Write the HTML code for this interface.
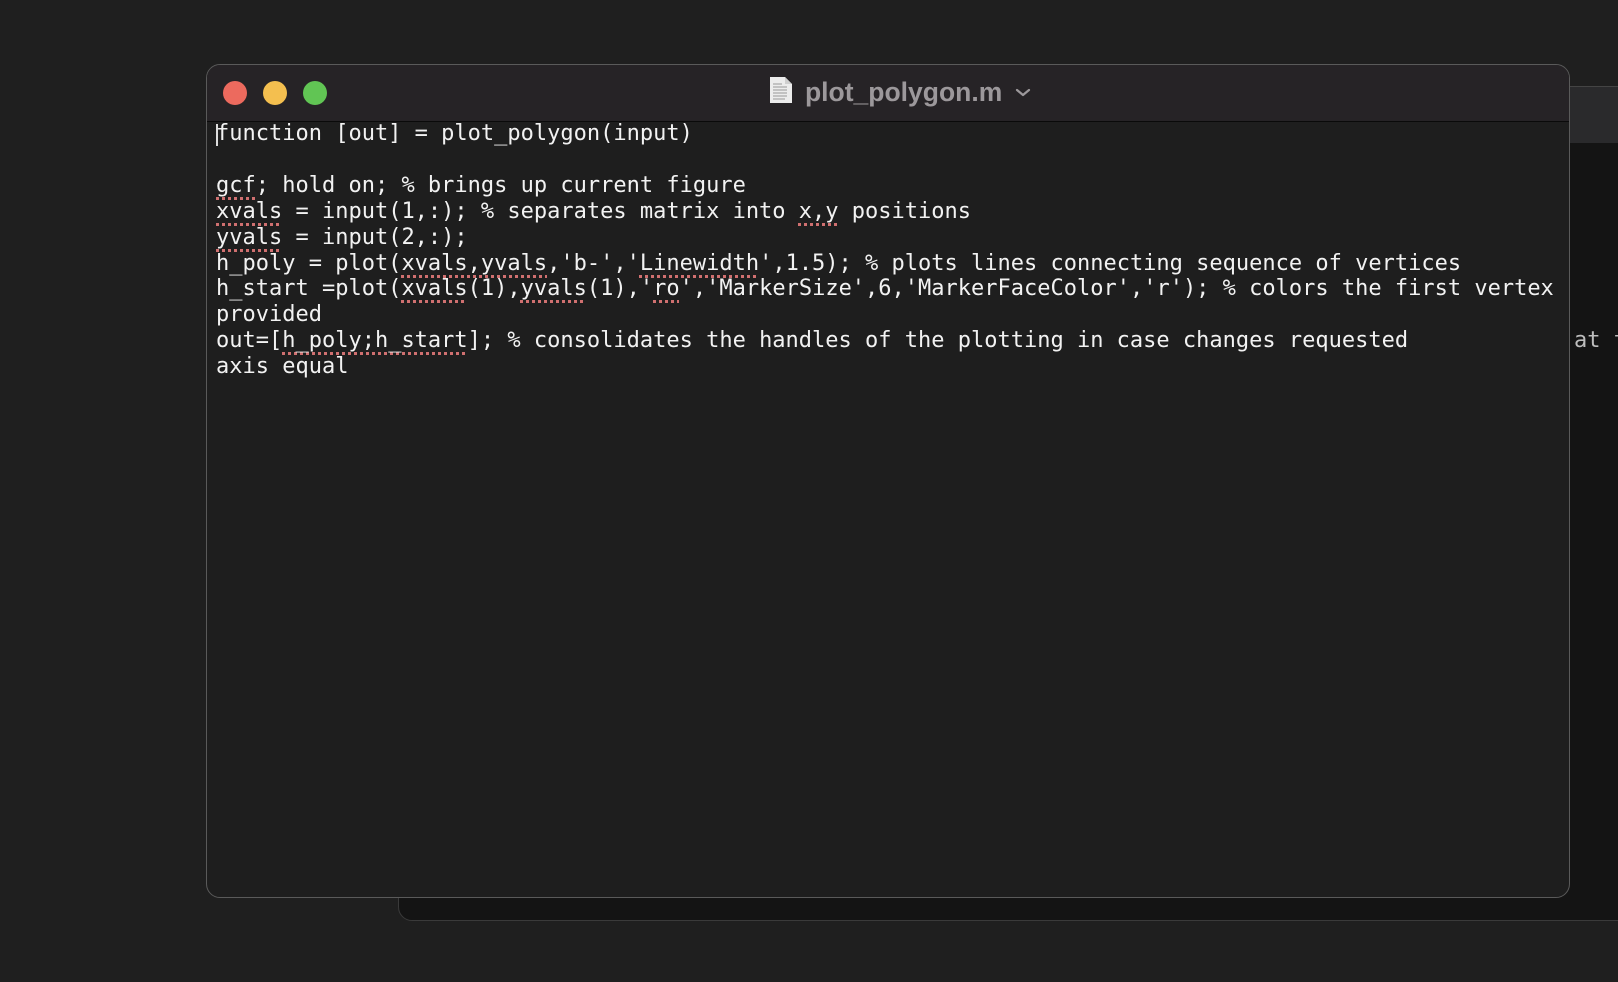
<!DOCTYPE html>
<html><head><style>
html,body{margin:0;padding:0;width:1618px;height:982px;background:#1f1f1f;overflow:hidden;position:relative;font-family:"Liberation Sans",sans-serif}
.back{position:absolute;left:398px;top:86px;width:1300px;height:835px;background:#141414;border:1px solid #3a3a3a;border-radius:14px;box-sizing:border-box}
.backbar{position:absolute;left:1570px;top:86px;width:60px;height:56px;background:#2a2a2c;border-top:1px solid #444}
.backtxt{position:absolute;left:1574px;top:328px;font:22px/26px "DejaVu Sans Mono",monospace;color:#bdbdbd;white-space:nowrap}
.win{position:absolute;left:206px;top:64px;width:1364px;height:834px;background:#1e1e1e;border:1px solid #5a5a5a;border-radius:14px;box-sizing:border-box;overflow:hidden}
.bar{position:absolute;left:0;top:0;right:0;height:56px;background:#262326;border-bottom:1px solid #0a0a0a}
.dot{position:absolute;top:16px;width:24px;height:24px;border-radius:50%}
.title{position:absolute;left:598px;top:7px;font:bold 26.5px/40px "Liberation Sans",sans-serif;color:#9c989b}
.code{position:absolute;left:9px;top:56px;margin:0;font:22px/25.9px "DejaVu Sans Mono",monospace;color:#f2f2f2;white-space:pre}
.s{text-decoration:underline dotted #d07070;text-decoration-thickness:3px;text-underline-offset:5px}
.caret{position:absolute;left:9px;top:59px;width:2px;height:22px;background:#ddd}
</style></head><body>
<div class="back"></div>
<div class="backbar"></div>
<div class="backtxt">at t</div>
<div class="win">
<div class="bar">
<div class="dot" style="left:16px;background:#ec6a5e"></div>
<div class="dot" style="left:56px;background:#f4bf4f"></div>
<div class="dot" style="left:96px;background:#61c554"></div>
<svg style="position:absolute;left:562px;top:11px" width="24" height="28" viewBox="0 0 24 28"><path d="M1 1h15l7 7v19H1z" fill="#ececec"/><path d="M16 1v7h7" fill="#cfcfcf"/><g stroke="#999" stroke-width="1"><path d="M4 8h9M4 11h14M4 14h14M4 17h14M4 20h14M4 23h12"/></g></svg>
<div class="title">plot_polygon.m</div>
<svg style="position:absolute;left:808px;top:22px" width="16" height="12" viewBox="0 0 16 12"><path d="M2 3l6 5 6-5" fill="none" stroke="#9c989b" stroke-width="2.2" stroke-linecap="round" stroke-linejoin="round"/></svg>
</div>
<div class="caret"></div>
<pre class="code">function [out] = plot_polygon(input)

<span class="s">gcf</span>; hold on; % brings up current figure
<span class="s">xvals</span> = input(1,:); % separates matrix into <span class="s">x,y</span> positions
<span class="s">yvals</span> = input(2,:);
h_poly = plot(<span class="s">xvals,yvals</span>,'b-','<span class="s">Linewidth</span>',1.5); % plots lines connecting sequence of vertices
h_start =plot(<span class="s">xvals</span>(1),<span class="s">yvals</span>(1),'<span class="s">ro</span>','MarkerSize',6,'MarkerFaceColor','r'); % colors the first vertex
provided
out=[<span class="s">h_poly;h_start</span>]; % consolidates the handles of the plotting in case changes requested
axis equal</pre>
</div>
</body></html>
